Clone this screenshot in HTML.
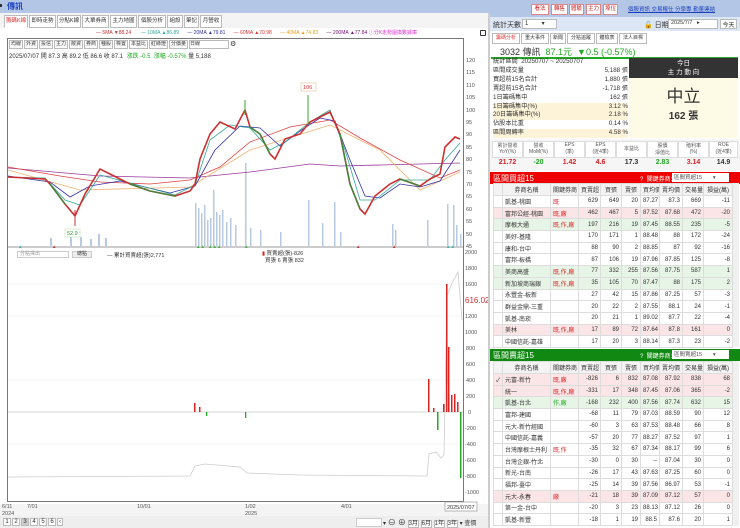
<!DOCTYPE html>
<html><head><meta charset="utf-8"><style>
*{margin:0;padding:0;box-sizing:border-box}
body{width:740px;height:528px;overflow:hidden;background:#fff;font-family:"Liberation Sans","Noto Sans CJK TC",sans-serif;font-size:7px;color:#333;position:relative}
.a{position:absolute}
.tab{position:absolute;top:15px;height:13px;border:1px solid #bbb;background:#fff;font-size:5.5px;line-height:11px;text-align:center;color:#333;overflow:hidden;white-space:nowrap}
.btn{position:absolute;top:4px;height:11px;border:1px solid #d88;background:#fff;color:#c22;font-size:5.5px;line-height:9px;text-align:center;overflow:hidden;white-space:nowrap}
.tb{display:inline-block;border:1px solid #bbb;font-size:5px;height:9px;line-height:7px;text-align:center;overflow:hidden;white-space:nowrap;background:#fafafa;margin-right:1px}
table{border-collapse:collapse;font-size:6px;table-layout:fixed}
td{border:1px solid #ddd;height:11.7px;padding:0 2px;text-align:right;white-space:nowrap;overflow:hidden}
td.n{text-align:left}
tr.h td{background:#f3f3f3;text-align:center;height:12px}
tr.p td{background:#fbe5e6}
tr.g td{background:#e6f5e6}
.r{color:#d22}.gr{color:#2a2}
</style></head><body>
<div class="a" style="left:0;top:0;width:740px;height:13px;background:#b3c6e5"></div>
<div class="a" style="left:7px;top:1px;font-size:8px;color:#1a3fc0;font-weight:bold">傳訊</div>
<div class="a" style="left:0;top:4px;width:2px;height:3px;background:#333"></div>
<div class="a" style="left:0;top:13px;width:488px;height:515px;background:#f4f4f4"></div>
<div class="tab" style="left:4px;width:24px;color:#d33;border-bottom-color:#fff">籌碼K線</div>
<div class="tab" style="left:29px;width:27px">即時走勢</div>
<div class="tab" style="left:57px;width:24px">分點K線</div>
<div class="tab" style="left:82px;width:27px">大單券商</div>
<div class="tab" style="left:110px;width:27px">主力地圖</div>
<div class="tab" style="left:138px;width:28px">個股分析</div>
<div class="tab" style="left:167px;width:16px">組設</div>
<div class="tab" style="left:184px;width:15px">筆記</div>
<div class="tab" style="left:200px;width:22px">月營收</div>
<div class="a" style="left:0;top:28px;width:488px;height:476px;background:#fff"></div>
<div class="a" style="left:96px;top:29px;font-size:5px;white-space:nowrap">
<span style="color:#c33">— 5MA ▼88.24</span>&nbsp;&nbsp;&nbsp;&nbsp;&nbsp;&nbsp;&nbsp;<span style="color:#3a9">— 10MA ▲86.89</span>&nbsp;&nbsp;&nbsp;&nbsp;&nbsp;&nbsp;<span style="color:#33a">— 20MA ▲79.81</span>&nbsp;&nbsp;&nbsp;&nbsp;&nbsp;&nbsp;<span style="color:#d33">— 60MA ▲70.98</span>&nbsp;&nbsp;&nbsp;&nbsp;&nbsp;&nbsp;<span style="color:#e9a020">— 40MA ▲74.83</span>&nbsp;&nbsp;&nbsp;&nbsp;&nbsp;&nbsp;<span style="color:#717">— 200MA ▲77.84</span> <span style="color:#d3c">ⓘ分K走勢圖換數據庫</span></div>
<div class="a" style="left:480px;top:30px;width:6px;height:6px;border:1.5px solid #333;border-radius:1px"></div>
<div class="a" style="left:7px;top:38px;width:457px;height:464px;border:1px solid #777"></div>
<div class="a" style="left:9px;top:40px;white-space:nowrap">
<span class="tb" style="width:14px">均線</span><span class="tb" style="width:14px">外資</span><span class="tb" style="width:14px">投信</span><span class="tb" style="width:14px">主力</span><span class="tb" style="width:14px">散資</span><span class="tb" style="width:14px">券商</span><span class="tb" style="width:14px">種股</span><span class="tb" style="width:14px">標置</span><span class="tb" style="width:19px">本益比</span><span class="tb" style="width:19px">紅綠燈</span><span class="tb" style="width:19px">分價量</span><span class="tb" style="width:40px;text-align:left;background:#fff">日線</span><span style="font-size:7px;vertical-align:top">⚙</span></div>
<div class="a" style="left:9px;top:51px;font-size:6px;white-space:nowrap">2025/07/07 開 87.3 高 89.2 低 86.6 收 87.1 &nbsp;<span class="gr">漲跌 -0.5 &nbsp;漲幅 -0.57%</span> 量 5,188</div>
<svg class="a" style="left:0;top:0" width="490" height="528">
<g font-size="5.5" fill="#555" font-family="Liberation Sans">
<text x="466" y="62">120</text><text x="466" y="74">115</text><text x="466" y="87">110</text><text x="466" y="99">105</text><text x="466" y="112">100</text><text x="466" y="124">95</text><text x="466" y="136">90</text><text x="466" y="149">85</text><text x="466" y="161">80</text><text x="466" y="174">75</text><text x="466" y="186">70</text><text x="466" y="198">65</text><text x="466" y="211">60</text><text x="466" y="223">55</text><text x="466" y="236">50</text><text x="466" y="248">45</text>
<text x="465" y="254">2000</text><text x="465" y="270">1800</text><text x="465" y="286">1600</text><text x="465" y="318">1200</text><text x="465" y="334">1000</text><text x="466" y="350">800</text><text x="466" y="366">600</text><text x="466" y="382">400</text><text x="466" y="398">200</text><text x="468" y="414">0</text><text x="465" y="430">-200</text><text x="465" y="446">-400</text><text x="465" y="462">-600</text><text x="465" y="478">-800</text><text x="465" y="494">-1000</text>
</g>
<text x="465" y="303" font-size="8" fill="#c33" font-family="Liberation Sans">616.02</text>
<g fill="#b8c9e2">
<rect x="50" y="238" width="2" height="8"/><rect x="70" y="236" width="2" height="10"/><rect x="80" y="237" width="2" height="9"/><rect x="90" y="239" width="2" height="7"/><rect x="98" y="234" width="2" height="12"/><rect x="105" y="238" width="2" height="8"/>
<rect x="195" y="203" width="1.5" height="43"/><rect x="198" y="208" width="1.5" height="38"/><rect x="201" y="213" width="1.5" height="33"/><rect x="204" y="205" width="1.5" height="41"/><rect x="207" y="220" width="1.5" height="26"/><rect x="210" y="218" width="1.5" height="28"/><rect x="213" y="190" width="1.5" height="56"/><rect x="216" y="212" width="1.5" height="34"/><rect x="219" y="215" width="1.5" height="31"/><rect x="222" y="210" width="1.5" height="36"/><rect x="226" y="222" width="1.5" height="24"/><rect x="230" y="218" width="1.5" height="28"/><rect x="235" y="225" width="1.5" height="21"/><rect x="245" y="163" width="1.5" height="83"/><rect x="250" y="228" width="1.5" height="18"/><rect x="260" y="230" width="1.5" height="16"/><rect x="280" y="232" width="1.5" height="14"/><rect x="308" y="200" width="1.5" height="46"/><rect x="322" y="223" width="1.5" height="23"/><rect x="334" y="202" width="1.5" height="44"/><rect x="340" y="232" width="1.5" height="14"/><rect x="392" y="224" width="1.5" height="22"/><rect x="395" y="230" width="1.5" height="16"/><rect x="427" y="220" width="1.5" height="26"/><rect x="447" y="204" width="1.5" height="42"/><rect x="453" y="205" width="1.5" height="41"/><rect x="456" y="225" width="1.5" height="21"/><rect x="460" y="234" width="1.5" height="12"/>
</g>
<polyline fill="none" stroke="#9a3a9a" stroke-width=".8" points="8,168 100,176 190,178 250,172 310,164 340,166 460,163"/>
<polyline fill="none" stroke="#f0b070" stroke-width=".8" points="8,170 80,190 190,187 250,150 330,125 380,150 420,190 460,172"/>
<polyline fill="none" stroke="#d44" stroke-width=".8" points="8,167 60,176 100,182 150,184 190,180 220,167 250,142 290,127 330,120 360,138 400,160 440,178 460,170"/>
<polyline fill="none" stroke="#33a" stroke-width=".8" points="8,176 50,182 70,197 90,186 120,181 170,193 195,186 215,150 240,126 260,128 280,146 300,131 320,118 335,121 350,160 365,196 380,198 400,184 420,187 440,181 460,150"/>
<polyline fill="none" stroke="#3a9" stroke-width=".8" points="8,177 45,178 65,200 80,205 100,175 130,183 175,195 195,185 210,140 230,125 250,128 270,150 285,142 310,122 330,110 345,150 360,200 375,200 400,180 430,180 445,160 460,143"/>
<polyline fill="none" stroke="#cc3030" stroke-width="1.6" points="8,177 45,179 50,184 65,204 75,216 85,194 100,169 110,174 130,184 150,191 175,196 190,191 195,184 200,159 210,134 220,122 235,129 245,110 250,127 260,134 270,154 275,159 285,139 300,134 310,122 320,117 330,112 340,134 345,159 350,184 360,209 365,214 375,196 390,184 400,179 420,186 430,179 440,174 445,147 455,137 460,139"/>
<g stroke="#3a8a3a" stroke-width="1.4" fill="none"><polyline points="50,184 65,204"/><polyline points="130,184 150,191 175,196"/><polyline points="250,127 260,134 270,154"/><polyline points="340,134 345,159 350,184 360,209"/><polyline points="400,179 420,186"/></g>
<line x1="75" y1="210" x2="75" y2="226" stroke="#c33"/><line x1="245" y1="100" x2="245" y2="115" stroke="#3a3"/><line x1="308" y1="95" x2="308" y2="125" stroke="#3a3"/>
<rect x="301" y="83" width="15" height="8" fill="#fff" stroke="#e8c090" stroke-width=".6"/><text x="303" y="89" font-size="5.5" fill="#d33">106</text>
<rect x="65" y="229" width="15" height="8" fill="#fff" stroke="#bde0b0" stroke-width=".6"/><text x="67" y="235" font-size="5.5" fill="#393">52.9</text>
<g font-size="4.5"><text x="18" y="248" fill="#3cc">▲</text><text x="52" y="248" fill="#c22">▲</text><text x="196" y="248" fill="#3c3">▲▲</text><text x="208" y="248" fill="#3c3">▲▲▲</text><text x="244" y="248" fill="#3c3">▲</text><text x="356" y="248" fill="#c22">▲</text><text x="392" y="248" fill="#c22">▲</text><text x="446" y="248" fill="#3cc">▲▲</text></g>
<line x1="8" y1="247" x2="463" y2="247" stroke="#777" stroke-width=".8"/>
<g stroke="#eee" stroke-width=".5"><line x1="8" y1="284" x2="463" y2="284"/><line x1="8" y1="316" x2="463" y2="316"/><line x1="8" y1="380" x2="463" y2="380"/><line x1="8" y1="444" x2="463" y2="444"/></g>
<line x1="8" y1="412" x2="463" y2="412" stroke="#aaa" stroke-width=".6"/>
<polyline fill="none" stroke="#ccc" stroke-width=".8" points="8,477 190,476 195,466 205,464 240,467 247,473 300,475 427,476 429,454 436,452 441,458 444,455 447,296 452,283 458,272 462,320"/>
<g fill="#d22"><rect x="194" y="403" width="1.5" height="9"/><rect x="199" y="407" width="1.5" height="5"/><rect x="428" y="379" width="1.5" height="33"/><rect x="433" y="408" width="1.5" height="4"/><rect x="443" y="404" width="1.5" height="8"/><rect x="446" y="284" width="1.5" height="128"/><rect x="448" y="347" width="1.5" height="65"/><rect x="451" y="395" width="1.5" height="17"/><rect x="454" y="394" width="1.5" height="18"/><rect x="457" y="402" width="1.5" height="10"/></g>
<g fill="#2a2"><rect x="206" y="412" width="1.3" height="4"/><rect x="245" y="412" width="1.3" height="6"/><rect x="437" y="412" width="1.5" height="18"/><rect x="460" y="412" width="1.5" height="66"/></g>
<g font-size="5.5" fill="#555"><text x="2" y="508">6/11</text><text x="2" y="515">2024</text><text x="27" y="508">7/01</text><text x="137" y="508">10/01</text><text x="245" y="508">1/02</text><text x="245" y="515">2025</text><text x="341" y="508">4/01</text></g>
<rect x="445" y="502" width="32" height="9" fill="#fff" stroke="#888" stroke-width=".6"/><text x="447" y="509" font-size="5.5" fill="#333">2025/07/07</text>
</svg>
<div class="a" style="left:17px;top:251px;width:52px;height:7px;border:1px solid #ccc;font-size:5px;color:#999;line-height:5px;padding-left:2px">分點擇出</div>
<div class="a" style="left:72px;top:251px;width:20px;height:7px;border:1px solid #ccc;background:#eee;font-size:5px;text-align:center;line-height:5px">總點</div>
<div class="a" style="left:107px;top:251px;font-size:5.5px">— 累計買賣超(張)2,771</div>
<div class="a" style="left:262px;top:251px;font-size:5.5px;line-height:7px"><span class="r">▮</span> 買賣超(張)-826<br>&nbsp;&nbsp;買張 6 賣張 832</div>
<div class="a" style="left:0;top:516px;width:488px;height:12px;background:#eee"></div>
<div class="a" style="left:3px;top:518px;display:flex;gap:1px;font-size:6px">
<span style="border:1px solid #bbb;width:8px;text-align:center;background:#fff">1</span><span style="border:1px solid #bbb;width:8px;text-align:center;background:#fff">2</span><span style="border:1px solid #bbb;width:8px;text-align:center;background:#ccc">3</span><span style="border:1px solid #bbb;width:8px;text-align:center;background:#fff">4</span><span style="border:1px solid #bbb;width:8px;text-align:center;background:#fff">5</span><span style="border:1px solid #bbb;width:8px;text-align:center;background:#fff">6</span><span style="border:1px solid #bbb;width:6px;text-align:center;background:#fff">‹</span></div>
<div class="a" style="left:356px;top:518px;width:26px;height:9px;border:1px solid #ccc;background:#fff"></div>
<div class="a" style="left:383px;top:517px;font-size:6px;white-space:nowrap">▾ <span style="font-size:8px">⊖ ⊕</span> <span style="border:1px solid #bbb;background:#fff">3月</span> <span style="border:1px solid #bbb;background:#fff">6月</span> <span style="border:1px solid #bbb;background:#fff">1年</span> <span style="border:1px solid #bbb;background:#fff">3年</span> ▾ 查價</div>
<div class="a" style="left:488px;top:13px;width:2px;height:515px;background:#ccc"></div>

<div class="a" style="left:490px;top:0;width:250px;height:17px;background:#b3c6e5"></div>
<div class="btn" style="left:531px;width:18px">看法</div><div class="btn" style="left:551px;width:17px">轉售</div><div class="btn" style="left:569px;width:15px">體驗</div><div class="btn" style="left:586px;width:15px">主力</div><div class="btn" style="left:603px;width:15px">埠位</div>
<div class="a" style="left:628px;top:5px;font-size:5.5px;color:#1a3fc0;text-decoration:underline;white-space:nowrap">個股資訊 交易權仕 分學專 勤董連結</div>
<div class="a" style="left:490px;top:17px;width:250px;height:14px;background:#dde6f4"></div>
<div class="a" style="left:493px;top:20px;font-size:7px">統計天數</div>
<div class="a" style="left:522px;top:19px;width:35px;height:10px;border:1px solid #bbb;background:#fff;font-size:6px;padding-left:2px">1 &nbsp;&nbsp;&nbsp;&nbsp;&nbsp;&nbsp;&nbsp;▾</div>
<div class="a" style="left:644px;top:20px;font-size:7px">🔓 日期</div>
<div class="a" style="left:668px;top:19px;width:50px;height:10px;border:1px solid #bbb;background:#fff;font-size:5.5px;padding-left:2px">2025/7/7 &nbsp;&nbsp;▸</div>
<div class="a" style="left:720px;top:19px;width:17px;height:10px;border:1px solid #bbb;background:#fff;font-size:6px;text-align:center">今天</div>
<div class="a" style="left:492px;top:33px;white-space:nowrap">
<span class="tb" style="width:28px;height:11px;line-height:9px;color:#d33;background:#fff">籌碼分析</span><span class="tb" style="width:28px;height:11px;line-height:9px;background:#fff">重大事件</span><span class="tb" style="width:16px;height:11px;line-height:9px;background:#fff">新聞</span><span class="tb" style="width:28px;height:11px;line-height:9px;background:#fff">分點追蹤</span><span class="tb" style="width:22px;height:11px;line-height:9px;background:#fff">體檢表</span><span class="tb" style="width:28px;height:11px;line-height:9px;background:#fff">法人目標</span></div>
<div class="a" style="left:500px;top:45px;font-size:9px;white-space:nowrap">3032 傳訊 &nbsp;<span style="color:#2a2">87.1元 &nbsp;▼0.5 (-0.57%)</span></div>
<div class="a" style="left:491px;top:57px;width:247px;height:1.5px;background:#2a2"></div>
<div class="a" style="left:493px;top:58px;width:135px;font-size:6.2px;line-height:8.9px">
<div>統計區間 &nbsp;20250707 ~ 20250707</div>
<div>區間成交量<span style="float:right">5,188 張</span></div>
<div>買超前15名合計<span style="float:right">1,880 張</span></div>
<div>賣超前15名合計<span style="float:right">-1,718 張</span></div>
<div>1日籌碼集中<span style="float:right">162 張</span></div>
<div style="background:#fdf3d8">1日籌碼集中(%)<span style="float:right">3.12 %</span></div>
<div style="background:#fdf3d8">20日籌碼集中(%)<span style="float:right">2.18 %</span></div>
<div>佔股本比重<span style="float:right">0.14 %</span></div>
<div style="background:#fdf3d8">區間周轉率<span style="float:right">4.58 %</span></div>
</div>
<div class="a" style="left:629px;top:58px;width:109px;height:20px;background:#333;color:#fff;font-size:6.5px;text-align:center;line-height:9px;padding-top:1px">今日<br>主 力 動 向</div>
<div class="a" style="left:629px;top:78px;width:109px;height:60px;background:#fdfbe6;text-align:center"><div style="font-size:17px;color:#333;margin-top:4px">中立</div><div style="font-size:10px;font-weight:bold">162 張</div></div>
<div class="a" style="left:490px;top:139px;width:250px;height:32px;background:#f6f6f6"></div>
<div class="a" style="left:492px;top:141px;display:flex;font-size:5px;text-align:center;color:#555">
<div style="width:31px;height:17px;border:1px solid #ddd;background:#fff">累計營收<br>YoY(%)</div><div style="width:31px;height:17px;border:1px solid #ddd;background:#fff">營收<br>MoM(%)</div><div style="width:31px;height:17px;border:1px solid #ddd;background:#fff">EPS<br>(季)</div><div style="width:31px;height:17px;border:1px solid #ddd;background:#fff">EPS<br>(近4季)</div><div style="width:31px;height:17px;border:1px solid #ddd;background:#fff;line-height:15px">本益比</div><div style="width:31px;height:17px;border:1px solid #ddd;background:#fff">股價<br>淨值比</div><div style="width:31px;height:17px;border:1px solid #ddd;background:#fff">殖利率<br>(%)</div><div style="width:29px;height:17px;border:1px solid #ddd;background:#fff">ROE<br>(近4季)</div></div>
<div class="a" style="left:492px;top:159px;display:flex;font-size:7px;font-weight:bold;text-align:center">
<div style="width:31px" class="r">21.72</div><div style="width:31px" class="gr">-20</div><div style="width:31px" class="r">1.42</div><div style="width:31px" class="r">4.6</div><div style="width:31px">17.3</div><div style="width:31px" class="gr">2.83</div><div style="width:31px" class="r">3.14</div><div style="width:29px">14.9</div></div>

<div class="a" style="left:490px;top:172px;width:250px;height:12px;background:#e00"></div>
<div class="a" style="left:493px;top:173px;color:#fff;font-size:8px">區間買超15</div>
<div class="a" style="left:640px;top:174px;color:#fff;font-size:6px">? &nbsp;關鍵券商:</div>
<div class="a" style="left:672px;top:173px;width:57px;height:9px;background:#fff;font-size:5.5px;padding-left:2px;color:#555">區間買超15 &nbsp;&nbsp;&nbsp;&nbsp;&nbsp;&nbsp;▾</div>
<table class="a" style="left:493px;top:183px;width:239px">
<colgroup><col style="width:9px"><col style="width:48px"><col style="width:28px"><col style="width:22px"><col style="width:21px"><col style="width:19px"><col style="width:19px"><col style="width:23px"><col style="width:21px"><col style="width:29px"></colgroup>
<tr class="h"><td></td><td>券商名稱</td><td>關鍵券商</td><td>買賣超</td><td>買張</td><td>賣張</td><td>買均價</td><td>賣均價</td><td>交易量</td><td>損益(萬)</td></tr>
<tr><td></td><td class="n">凱基-桃園</td><td class="n r">既</td><td>629</td><td>649</td><td>20</td><td>87.27</td><td>87.3</td><td>669</td><td>-11</td></tr>
<tr class="p"><td></td><td class="n">富邦公經-桃園</td><td class="n r">既,廠</td><td>462</td><td>467</td><td>5</td><td>87.52</td><td>87.68</td><td>472</td><td>-20</td></tr>
<tr class="g"><td></td><td class="n">摩根大通</td><td class="n r">既,作,廠</td><td>197</td><td>216</td><td>19</td><td>87.45</td><td>88.55</td><td>235</td><td>-5</td></tr>
<tr><td></td><td class="n">美好-基隆</td><td></td><td>170</td><td>171</td><td>1</td><td>88.48</td><td>88</td><td>172</td><td>-24</td></tr>
<tr><td></td><td class="n">康和-台中</td><td></td><td>88</td><td>90</td><td>2</td><td>88.85</td><td>87</td><td>92</td><td>-16</td></tr>
<tr><td></td><td class="n">富邦-板橋</td><td></td><td>87</td><td>106</td><td>19</td><td>87.96</td><td>87.85</td><td>125</td><td>-8</td></tr>
<tr class="g"><td></td><td class="n">美商高盛</td><td class="n r">既,作,廠</td><td>77</td><td>332</td><td>255</td><td>87.56</td><td>87.75</td><td>587</td><td>1</td></tr>
<tr class="g"><td></td><td class="n">新加坡商瑞銀</td><td class="n r">既,作,廠</td><td>35</td><td>105</td><td>70</td><td>87.47</td><td>88</td><td>175</td><td>2</td></tr>
<tr><td></td><td class="n">永豐金-板新</td><td></td><td>27</td><td>42</td><td>15</td><td>87.86</td><td>87.25</td><td>57</td><td>-3</td></tr>
<tr><td></td><td class="n">群益金鼎-三重</td><td></td><td>20</td><td>22</td><td>2</td><td>87.55</td><td>88.1</td><td>24</td><td>-1</td></tr>
<tr><td></td><td class="n">凱基-南崁</td><td></td><td>20</td><td>21</td><td>1</td><td>89.02</td><td>87.7</td><td>22</td><td>-4</td></tr>
<tr class="p"><td></td><td class="n">美林</td><td class="n r">既,作,廠</td><td>17</td><td>89</td><td>72</td><td>87.64</td><td>87.8</td><td>161</td><td>0</td></tr>
<tr><td></td><td class="n">中國信託-嘉雄</td><td></td><td>17</td><td>20</td><td>3</td><td>88.14</td><td>87.3</td><td>23</td><td>-2</td></tr>
</table>
<div class="a" style="left:733px;top:183px;width:6px;height:164px;background:#f0f0f0"></div>

<div class="a" style="left:490px;top:349px;width:250px;height:12px;background:#118811"></div>
<div class="a" style="left:493px;top:350px;color:#fff;font-size:8px">區間賣超15</div>
<div class="a" style="left:640px;top:351px;color:#fff;font-size:6px">? &nbsp;關鍵券商:</div>
<div class="a" style="left:672px;top:350px;width:57px;height:9px;background:#fff;font-size:5.5px;padding-left:2px;color:#555">區間賣超15 &nbsp;&nbsp;&nbsp;&nbsp;&nbsp;&nbsp;▾</div>
<table class="a" style="left:493px;top:361px;width:239px">
<colgroup><col style="width:9px"><col style="width:48px"><col style="width:28px"><col style="width:22px"><col style="width:21px"><col style="width:19px"><col style="width:19px"><col style="width:23px"><col style="width:21px"><col style="width:29px"></colgroup>
<tr class="h"><td></td><td>券商名稱</td><td>關鍵券商</td><td>買賣超</td><td>買張</td><td>賣張</td><td>買均價</td><td>賣均價</td><td>交易量</td><td>損益(萬)</td></tr>
<tr class="p"><td>✓</td><td class="n">元富-新竹</td><td class="n r">既,廠</td><td>-826</td><td>6</td><td>832</td><td>87.08</td><td>87.92</td><td>838</td><td>68</td></tr>
<tr class="p"><td></td><td class="n">統一</td><td class="n r">既,作,廠</td><td>-331</td><td>17</td><td>348</td><td>87.45</td><td>87.06</td><td>365</td><td>-2</td></tr>
<tr class="g"><td></td><td class="n">凱基-台北</td><td class="n gr">作,廠</td><td>-168</td><td>232</td><td>400</td><td>87.56</td><td>87.74</td><td>632</td><td>15</td></tr>
<tr><td></td><td class="n">富邦-建國</td><td></td><td>-68</td><td>11</td><td>79</td><td>87.03</td><td>88.59</td><td>90</td><td>12</td></tr>
<tr><td></td><td class="n">元大-新竹經國</td><td></td><td>-60</td><td>3</td><td>63</td><td>87.53</td><td>88.48</td><td>66</td><td>8</td></tr>
<tr><td></td><td class="n">中國信託-嘉義</td><td></td><td>-57</td><td>20</td><td>77</td><td>88.27</td><td>87.52</td><td>97</td><td>1</td></tr>
<tr><td></td><td class="n">台灣摩根士丹利</td><td class="n r">既,作</td><td>-35</td><td>32</td><td>67</td><td>87.34</td><td>88.17</td><td>99</td><td>6</td></tr>
<tr><td></td><td class="n">台灣企銀-竹北</td><td></td><td>-30</td><td>0</td><td>30</td><td>--</td><td>87.04</td><td>30</td><td>0</td></tr>
<tr><td></td><td class="n">新光-台南</td><td></td><td>-26</td><td>17</td><td>43</td><td>87.63</td><td>87.25</td><td>60</td><td>0</td></tr>
<tr><td></td><td class="n">福邦-臺中</td><td></td><td>-25</td><td>14</td><td>39</td><td>87.56</td><td>86.97</td><td>53</td><td>-1</td></tr>
<tr class="p"><td></td><td class="n">元大-永春</td><td class="n r">廠</td><td>-21</td><td>18</td><td>39</td><td>87.09</td><td>87.12</td><td>57</td><td>0</td></tr>
<tr><td></td><td class="n">第一金-台中</td><td></td><td>-20</td><td>3</td><td>23</td><td>88.13</td><td>87.12</td><td>26</td><td>0</td></tr>
<tr><td></td><td class="n">凱基-新豐</td><td></td><td>-18</td><td>1</td><td>19</td><td>88.5</td><td>87.6</td><td>20</td><td>1</td></tr>
</table>
<div class="a" style="left:733px;top:361px;width:6px;height:165px;background:#f0f0f0"></div>
</body></html>
